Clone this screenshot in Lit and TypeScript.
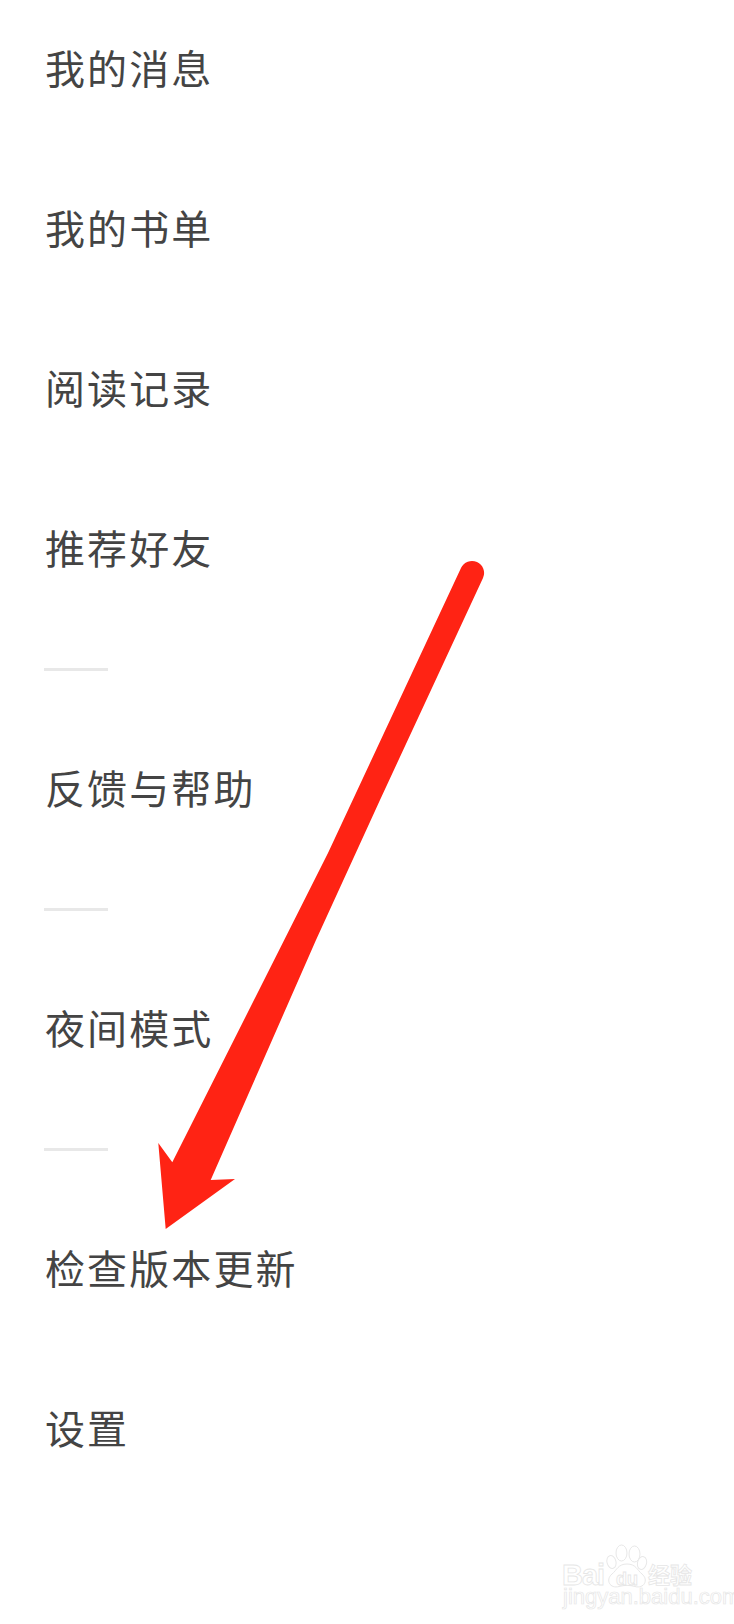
import { LitElement, html, css, svg } from "lit";
import { customElement } from "lit/decorators.js";

const groups = [
  ["我的消息", "我的书单", "阅读记录", "推荐好友"],
  ["反馈与帮助"],
  ["夜间模式"],
  ["检查版本更新", "设置"],
];

const arrowShape = svg`
  <path class="arrow" d="M461 568 A12 12 0 0 1 483 578 L380 800 L316 940 L210.7 1180 L235 1179 L165.7 1229 L158.3 1143 L172.3 1162.3 L328 853 Z" />
`;

const paw = svg`
  <g class="paw">
    <ellipse cx="621.5" cy="1553" rx="5.5" ry="8" />
    <ellipse cx="634.5" cy="1554" rx="5.5" ry="8" />
    <ellipse cx="611.5" cy="1562" rx="4.5" ry="6.5" transform="rotate(-15 611.5 1562)" />
    <ellipse cx="642" cy="1563" rx="4.5" ry="6.5" transform="rotate(15 642 1563)" />
    <path d="M627 1564 C618 1564 617 1570 612 1574 C605 1580 610 1589 619 1586.5 C624 1585 630 1585 635 1586.5 C644 1589 649 1580 642 1574 C637 1570 636 1564 627 1564 Z" />
  </g>
`;

@customElement("app-root")
export class AppRoot extends LitElement {
  static styles = css`
    :host {
      display: block;
      position: relative;
      width: 734px;
      height: 1624px;
      overflow: hidden;
      background: #ffffff;
      font-family: "Noto Sans CJK SC", "Noto Sans", sans-serif;
    }
    .menu {
      display: flex;
      flex-direction: column;
      margin-top: -13px;
    }
    .row {
      height: 160px;
      display: flex;
      align-items: center;
      padding-left: 45px;
      font-size: 40px;
      letter-spacing: 2.1px;
      color: #444444;
    }
    .divider {
      width: 64px;
      height: 3px;
      margin: 41px 0 36px 44px;
      background: #e8e8e8;
    }
    .overlay {
      position: absolute;
      inset: 0;
      width: 734px;
      height: 1624px;
      pointer-events: none;
    }
    .arrow {
      fill: #ff2314;
    }
    .paw ellipse,
    .paw path {
      fill: #ffffff;
      stroke: #e8e8e8;
      stroke-width: 1;
    }
    .mark {
      font-family: "Liberation Sans", sans-serif;
      fill: #ffffff;
      stroke: #e6e6e6;
      stroke-width: 0.8;
    }
    .mark-big {
      font-size: 29px;
      font-weight: 700;
      letter-spacing: -1px;
    }
    .mark-du {
      font-size: 18px;
      font-weight: 700;
    }
    .mark-cjk {
      font-family: "Noto Sans CJK SC", sans-serif;
      font-size: 22px;
      font-weight: 700;
    }
    .mark-url {
      font-size: 22px;
      stroke-width: 0.7;
    }
  `;

  render() {
    return html`
      <div class="menu">
        ${groups.map(
          (g, i) => html`
            ${i > 0 ? html`<div class="divider"></div>` : ""}
            ${g.map((t) => html`<div class="row">${t}</div>`)}
          `
        )}
      </div>
      <svg class="overlay" viewBox="0 0 734 1624" aria-hidden="true">
        ${arrowShape}
        ${paw}
        <text class="mark mark-big" x="562" y="1585">Bai</text>
        <text class="mark mark-du" x="616" y="1585">du</text>
        <text class="mark mark-cjk" x="648" y="1583">经验</text>
        <text class="mark mark-url" x="563" y="1604">jingyan.baidu.com</text>
      </svg>
    `;
  }
}
